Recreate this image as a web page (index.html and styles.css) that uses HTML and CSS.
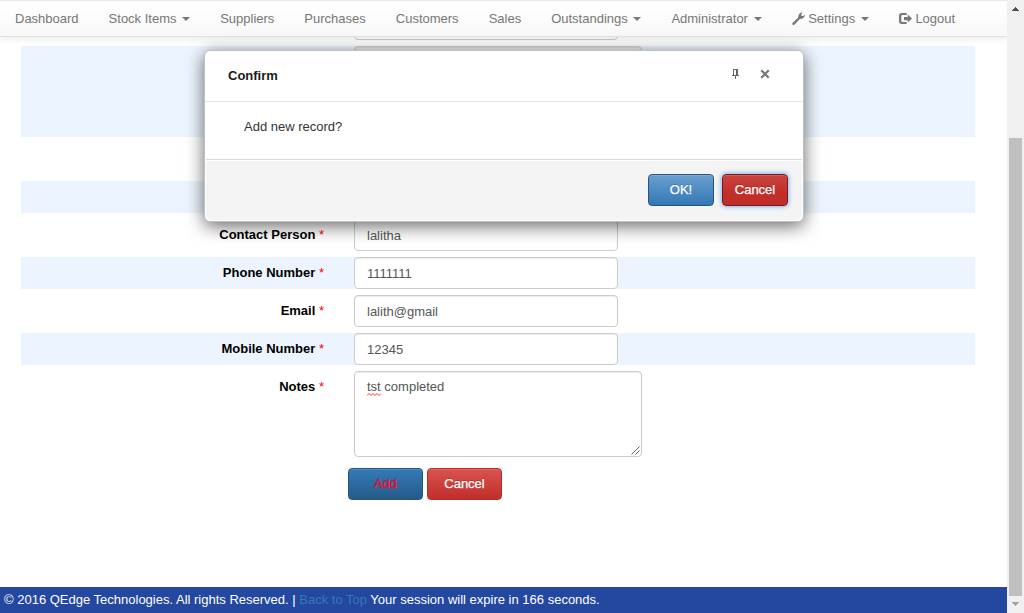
FILE: index.html
```html
<!DOCTYPE html>
<html lang="en">
<head>
<meta charset="utf-8">
<title>Add Supplier</title>
<link rel="stylesheet" href="styles.css">
</head>
<body>
<div class="page">
  <nav class="navbar">
    <a class="nav-link">Dashboard</a>
    <a class="nav-link">Stock Items <b class="caret"></b></a>
    <a class="nav-link">Suppliers</a>
    <a class="nav-link">Purchases</a>
    <a class="nav-link">Customers</a>
    <a class="nav-link">Sales</a>
    <a class="nav-link">Outstandings <b class="caret"></b></a>
    <a class="nav-link">Administrator <b class="caret"></b></a>
    <a class="nav-link"><svg class="icon" viewBox="0 0 13 13"><path d="M.5 10.900 6.300 5.500C5.900 2.800 7.800.3 10.600.4L9.200 2.400l.5 1.500 1.700.1L12.800 2.200c.4 2.900-2 5.200-4.700 4.600L2.600 12.600C1.300 13.500-.5 12.200.5 10.900z"/></svg> Settings <b class="caret"></b></a>
    <a class="nav-link"><svg class="icon" viewBox="0 0 13 13"><path d="M7.600 1H2.900C1.100 1 0 2.100 0 3.800v5.400C0 10.900 1.100 12 2.900 12h4.700V9.900H3.200c-.6 0-.9-.3-.9-.9V4c0-.6.3-.9.9-.9h4.400zM8.800 2.600V5H5v3.200h3.800v2.400L13 6.600z"/></svg> Logout</a>
  </nav>
  <main class="form">
    <div class="row"><span class="label"></span><span class="input"></span></div>
    <div class="row row-tall row-alt"><span class="label"></span><span class="input area disabled"></span></div>
    <div class="row"><span class="label"></span><span class="input"></span></div>
    <div class="row row-alt"><span class="label"></span><span class="input"></span></div>
    <div class="row"><span class="label">Contact Person <i class="req">*</i></span><span class="input">lalitha</span></div>
    <div class="row row-alt"><span class="label">Phone Number <i class="req">*</i></span><span class="input">1111111</span></div>
    <div class="row"><span class="label">Email <i class="req">*</i></span><span class="input">lalith@gmail</span></div>
    <div class="row row-alt"><span class="label">Mobile Number <i class="req">*</i></span><span class="input">12345</span></div>
    <div class="row row-tall"><span class="label">Notes <i class="req">*</i></span><span class="input area"><span class="misspelled">tst<svg class="squiggle" viewBox="0 0 14 3"><path d="M0 2.500 2 .5l2 2 2-2 2 2 2-2 2 2 2-2"/></svg></span> completed<svg class="grip" viewBox="0 0 9 9"><path d="M.5 8.500 8.500.5M4.500 8.500l4-4"/></svg></span></div>
    <div class="actions"><a class="btn btn-add">Add</a><a class="btn btn-danger">Cancel</a></div>
  </main>
  <footer class="footer">© 2016 QEdge Technologies. All rights Reserved. | <a class="top-link">Back to Top</a> Your session will expire in 166 seconds.</footer>
</div>
<div class="scrollbar">
  <svg class="arrow" viewBox="0 0 7 4"><path d="M3 0h1v1h1v1h1v1h1v1H0V3h1V2h1V1h1z"/></svg>
  <div class="thumb"></div>
  <svg class="arrow arrow-down" viewBox="0 0 7 4"><path d="M0 0h7v1H6v1H5v1H4v1H3V3H2V2H1V1H0z"/></svg>
</div>
<section class="dialog">
  <header class="dialog-head"><span class="dialog-title">Confirm</span>
    <svg class="pin" viewBox="0 0 7 10"><path fill-rule="evenodd" d="M1 0h5v6h1v1H4v3H3V7H0V6h1zM2 1v5h2V1z"/></svg>
    <svg class="close" viewBox="0 0 8 8"><path d="M1 1l6 6M7 1 1 7"/></svg>
  </header>
  <div class="dialog-body">Add new record?</div>
  <footer class="dialog-foot"><a class="btn btn-ok">OK!</a><a class="btn btn-danger btn-focus">Cancel</a></footer>
</section>
</body>
</html>
```
FILE: styles.css
```css
* { box-sizing: border-box; }
body {
  margin: 0;
  display: flex;
  height: 613px;
  overflow: hidden;
  background: #fff;
  font: 13px/18px "Liberation Sans", Arial, sans-serif;
  color: #000;
}
.page { position: relative; flex: 1; display: flex; flex-direction: column; overflow: hidden; }
.navbar {
  position: absolute;
  inset: 0 0 auto;
  z-index: 1;
  height: 37px;
  display: flex;
  white-space: nowrap;
  color: #777;
  background: linear-gradient(#fff, #f8f8f8);
  border-top: 1px solid #e7e7e7;
  border-bottom: 1px solid #e2e2e2;
  box-shadow: 0 1px 8px rgba(0, 0, 0, .1);
}
.nav-link { padding: 9px 15px 0; }
.caret {
  display: inline-block;
  margin-left: 2px;
  vertical-align: 2px;
  border: 4px solid transparent;
  border-top-color: #777;
  border-bottom: 0;
}
.icon { width: 13px; height: 13px; vertical-align: -2px; fill: #777; }
.form { flex: 1; padding: 8px 32px 0 21px; display: flex; flex-direction: column; gap: 6px; }
.row { height: 32px; display: flex; flex: none; }
.row-tall { height: 91px; }
.row-alt { background: #ecf5ff; }
.label { width: 333px; padding: 7px 30px 0 0; text-align: right; font-weight: bold; }
.req { font-style: normal; font-weight: normal; color: #f00; }
.input {
  width: 264px;
  height: 32px;
  padding: 7px 12px 0;
  border: 1px solid #ccc;
  border-radius: 4px;
  background: #fff;
  color: #555;
  box-shadow: inset 0 1px 1px rgba(0, 0, 0, .075);
}
.area { position: relative; width: 288px; height: 86px; padding-top: 6px; }
.disabled { background: #eee; }
.misspelled { position: relative; }
.squiggle { position: absolute; left: 0; bottom: -2px; width: 14px; height: 3px; fill: none; stroke: #f33; }
.grip { position: absolute; right: 1px; bottom: 1px; width: 9px; height: 9px; fill: none; stroke: #666; }
.actions { display: flex; gap: 4px; padding-left: 327px; }
.btn {
  height: 32px;
  padding-top: 6px;
  border: 1px solid #245580;
  border-radius: 4px;
  text-align: center;
  color: #fff;
  -webkit-text-stroke: .25px currentColor;
  text-shadow: 0 -1px 0 rgba(0, 0, 0, .2);
  box-shadow: inset 0 1px 0 rgba(255, 255, 255, .15);
}
.actions .btn { width: 75px; }
.btn-add { background: linear-gradient(#337ab7, #265a88); color: #ff0a2c; }
.btn-danger { background: linear-gradient(#d9534f, #c12e2a); border-color: #b92c28; }
.footer { height: 26px; padding: 4px 4px 0; background: #2447a0; color: #fff; }
.top-link { color: #337ab7; }
.scrollbar {
  width: 17px;
  padding: 7px 2px 6px;
  display: flex;
  flex-direction: column;
  align-items: center;
  background: #f0f0f0;
}
.arrow { width: 7px; height: 4px; fill: #505050; }
.arrow-down { margin-top: 6px; fill: #a3a3a3; }
.thumb { width: 13px; height: 458px; margin-top: 127px; background: #c0c0c0; }
.dialog {
  position: absolute;
  z-index: 2;
  left: 204px;
  top: 50px;
  width: 600px;
  height: 172px;
  display: flex;
  flex-direction: column;
  border: 1px solid #bfbfbf;
  border-radius: 6px;
  background: #fff;
  box-shadow: 0 4px 18px rgba(0, 0, 0, .6);
}
.dialog-head { height: 51px; display: flex; align-items: flex-start; padding: 15px 33px 0 23px; border-bottom: 1px solid #e5e5e5; }
.dialog-title { flex: 1; padding-top: 1px; font-weight: bold; color: #1a1a1a; }
.pin { width: 7px; height: 10px; margin: 3px 21px 0 0; fill: #666; }
.close { width: 10px; height: 10px; margin-top: 3px; fill: none; stroke: #777; stroke-width: 1.800; }
.dialog-body { height: 57px; padding: 16px 39px 0; color: #333; }
.dialog-foot {
  height: 61px;
  margin: 0 1px 1px;
  padding: 14px 14px 0;
  display: flex;
  justify-content: flex-end;
  gap: 8px;
  border-top: 1px solid #d9d9d9;
  border-radius: 0 0 5px 5px;
  background: #f4f4f4;
  box-shadow: inset 0 1px 0 #fff;
}
.dialog-foot .btn { width: 66px; }
.btn-ok { background: linear-gradient(#6b9fcf, #3278b5); }
.btn-focus { background: linear-gradient(#ca4541, #c12e2a 60%); border-color: #761c19; box-shadow: inset 0 1px 0 rgba(255, 255, 255, .15), 0 0 4px 1px #8bb4ef; }
```
